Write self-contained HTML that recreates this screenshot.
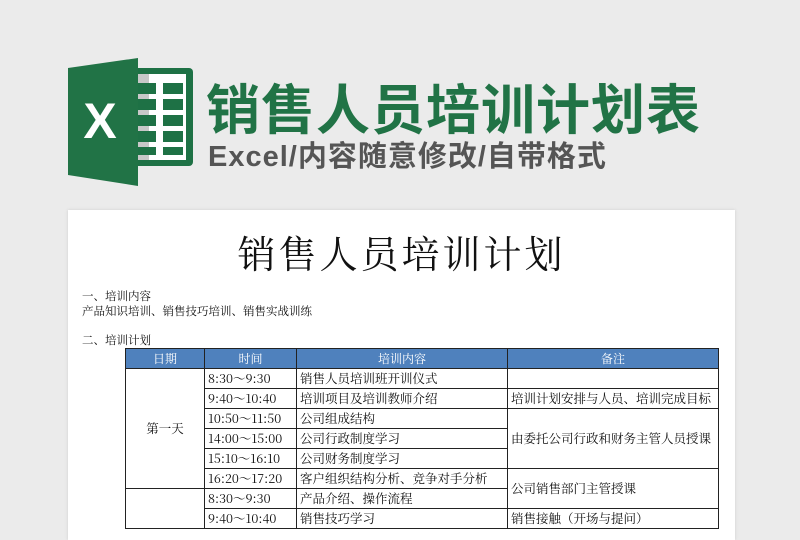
<!DOCTYPE html>
<html><head><meta charset="utf-8"><style>
body{margin:0;width:800px;height:526px;overflow:hidden;background:#ebebeb;position:relative;font-family:"Liberation Serif","Noto Serif CJK SC",serif;}
.t1{position:absolute;left:206px;top:66px;font:bold 54px "Liberation Sans","Noto Sans CJK SC",sans-serif;color:#217346;letter-spacing:1px;white-space:nowrap}
.t2{position:absolute;left:208px;top:133px;font:bold 29px "Liberation Sans","Noto Sans CJK SC",sans-serif;color:#555;letter-spacing:1px;white-space:nowrap}
.paper{position:absolute;left:68px;top:210px;width:667px;height:330px;background:#fff;box-shadow:0 0 3px #ccc}
.h{position:absolute;left:0;width:667px;text-align:center;top:14px;font-size:38px;color:#111;letter-spacing:3px}
.s{position:absolute;font-size:11.5px;color:#111;white-space:nowrap}
table{position:absolute;left:57px;top:138px;border-collapse:collapse;table-layout:fixed;font-size:12.5px;color:#111;font-family:"Noto Serif CJK SC",serif}
td{border:1.5px solid #222;height:19px;line-height:17px;padding:0 3px;white-space:nowrap;overflow:hidden}
th{background:#4f81bd;color:#fff;font-weight:normal;border:1.5px solid #222;height:18.5px;line-height:17px;font-size:12px;padding:0}
.c{text-align:center}
</style></head><body>
<svg style="position:absolute;left:64px;top:58px" width="132" height="128" viewBox="0 0 132 128">
<rect x="55" y="10" width="74" height="98" rx="4" fill="#1e7145"/>
<rect x="60" y="16" width="62" height="86" fill="#fff"/>
<rect x="60" y="16" width="25" height="86" fill="#c8c8c8"/>
<g fill="#1e7145">
<rect x="72" y="25" width="20" height="11"/><rect x="99" y="25" width="20" height="11"/>
<rect x="72" y="41" width="20" height="11"/><rect x="99" y="41" width="20" height="11"/>
<rect x="72" y="57" width="20" height="11"/><rect x="99" y="57" width="20" height="11"/>
<rect x="72" y="73" width="20" height="11"/><rect x="99" y="73" width="20" height="11"/>
<rect x="72" y="89" width="20" height="8"/><rect x="99" y="89" width="20" height="8"/>
</g>
<path d="M4 10 L74 0 L74 128 L4 117 Z" fill="#217346"/>
<text x="36" y="80" text-anchor="middle" font-family="Liberation Sans" font-weight="bold" font-size="50" fill="#fff">X</text>
</svg>
<div class="t1">销售人员培训计划表</div>
<div class="t2">Excel/内容随意修改/自带格式</div>
<div class="paper">
<div class="h">销售人员培训计划</div>
<div class="s" style="left:14px;top:78px">一、培训内容</div>
<div class="s" style="left:14px;top:93px">产品知识培训、销售技巧培训、销售实战训练</div>
<div class="s" style="left:14px;top:122px">二、培训计划</div>
<table>
<colgroup><col style="width:79px"><col style="width:92px"><col style="width:211px"><col style="width:211px"></colgroup>
<tr><th>日期</th><th>时间</th><th>培训内容</th><th>备注</th></tr>
<tr><td rowspan="6" class="c">第一天</td><td>8:30～9:30</td><td>销售人员培训班开训仪式</td><td></td></tr>
<tr><td>9:40～10:40</td><td>培训项目及培训教师介绍</td><td>培训计划安排与人员、培训完成目标</td></tr>
<tr><td>10:50～11:50</td><td>公司组成结构</td><td rowspan="3">由委托公司行政和财务主管人员授课</td></tr>
<tr><td>14:00～15:00</td><td>公司行政制度学习</td></tr>
<tr><td>15:10～16:10</td><td>公司财务制度学习</td></tr>
<tr><td>16:20～17:20</td><td>客户组织结构分析、竞争对手分析</td><td rowspan="2">公司销售部门主管授课</td></tr>
<tr><td rowspan="2"></td><td>8:30～9:30</td><td>产品介绍、操作流程</td></tr>
<tr><td>9:40～10:40</td><td>销售技巧学习</td><td>销售接触（开场与提问）</td></tr>
</table>
</div>
</body></html>
